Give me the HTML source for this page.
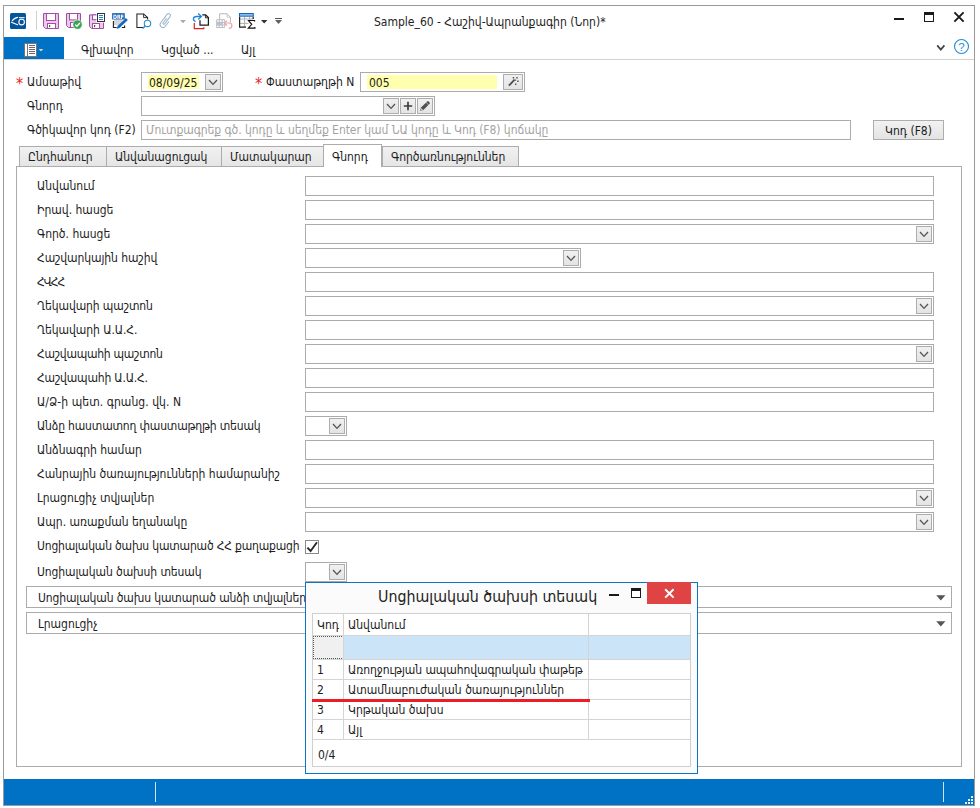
<!DOCTYPE html>
<html><head><meta charset="utf-8">
<style>
*{box-sizing:border-box;margin:0;padding:0}
html,body{width:980px;height:808px;background:#fff;overflow:hidden}
body{position:relative;font-family:"DejaVu Sans Condensed","DejaVu Sans","Liberation Sans",sans-serif;font-size:12px;color:#1c1c1c;line-height:16px}
.a{position:absolute}
.t{position:absolute;white-space:nowrap;height:16px;line-height:16px}
.f{position:absolute;border:1px solid #ababab;background:#fff;height:20px}
.b{position:absolute;width:16px;height:16px;border:1px solid #adadad;background:linear-gradient(#f0f0f0,#e4e4e4)}
.b svg{position:absolute;left:0;top:0}
.tab{position:absolute;top:146px;height:21px;border:1px solid #acacac;background:linear-gradient(#f1f1f1,#e5e5e5);text-align:left;padding-left:8px;line-height:21px;white-space:nowrap}
.red{color:#f02424}
.s{display:inline-block;white-space:nowrap}
</style></head><body>
<!-- window frame -->
<div class="a" id="win" style="left:3px;top:5px;width:972px;height:801px;border:1px solid #999;background:#fff"></div>

<!-- TITLEBAR -->
<div id="titlebar">
<!-- app icon -->
<svg class="a" style="left:10px;top:13px" width="16" height="16" viewBox="0 0 16 16"><rect x="0" y="0" width="16" height="16" rx="1.5" fill="#04549c"/><path d="M7.5 4.4 Q4 5.2 2.3 7.7" stroke="#fff" stroke-width="1.2" fill="none" stroke-linecap="round"/><path d="M1.4 9.3 L7.6 11.7" stroke="#fff" stroke-width="1.2" fill="none" stroke-linecap="round"/><path d="M8.9 4.7 H14.6" stroke="#fff" stroke-width="1.1" fill="none"/><circle cx="11.6" cy="9.1" r="2.8" stroke="#fff" stroke-width="1.1" fill="none"/></svg>
<div class="a" style="left:36px;top:11px;width:1px;height:19px;background:#d0d0d0"></div>
<!-- save -->
<svg class="a" style="left:43px;top:13px" width="16" height="16" viewBox="0 0 16 16"><path d="M0.5 0.5 H15.5 V15.5 H2.5 L0.5 13.5 Z" fill="#e8cbe8" stroke="#a64ca6" stroke-width="1"/><rect x="3.5" y="0.5" width="9" height="7" fill="#fff" stroke="#a64ca6"/><rect x="4.5" y="10.5" width="8" height="5" fill="#fff" stroke="#a64ca6"/><rect x="6" y="12" width="1.2" height="2.2" fill="#555"/></svg>
<!-- save + check -->
<svg class="a" style="left:66px;top:13px" width="17" height="17" viewBox="0 0 17 17"><path d="M0.5 0.5 H14.5 V14.5 H2.5 L0.5 12.5 Z" fill="#e8cbe8" stroke="#a64ca6" stroke-width="1"/><rect x="3.5" y="0.5" width="8" height="6.4" fill="#fff" stroke="#a64ca6"/><rect x="4.5" y="9.5" width="6" height="5" fill="#fff" stroke="#a64ca6"/><circle cx="11.5" cy="11.6" r="4.7" fill="#39a556" stroke="#fff" stroke-width="0.6"/><path d="M9.2 11.6 L10.9 13.3 L13.9 10" stroke="#fff" stroke-width="1.3" fill="none"/></svg>
<!-- save + doc -->
<svg class="a" style="left:89px;top:13px" width="17" height="17" viewBox="0 0 17 17"><path d="M0.5 1.9 H14.5 V15.5 H2.5 L0.5 13.5 Z" fill="#e8cbe8" stroke="#a64ca6" stroke-width="1"/><rect x="3.5" y="1.9" width="6" height="4.8" fill="#fff" stroke="#a64ca6"/><rect x="3.5" y="10.5" width="7" height="5" fill="#fff" stroke="#a64ca6"/><rect x="5" y="12" width="1.2" height="2.2" fill="#555"/><rect x="7.4" y="-0.6" width="9.2" height="10.2" fill="#fff"/><rect x="8.5" y="0.5" width="7" height="8" fill="#fff" stroke="#333"/><path d="M10 2.5 H14 M10 4.5 H14 M10 6.5 H14" stroke="#1e7fd2" stroke-width="1"/></svg>
<!-- DRF -->
<svg class="a" style="left:112px;top:13px;will-change:transform" width="17" height="17" viewBox="0 0 17 17"><rect x="2" y="6.4" width="8.2" height="5.8" fill="#d6d6d6"/><path d="M1.4 7.9 V14.5 H4.6 M9.8 14.5 H12.6 V12.4" stroke="#222" stroke-width="1.1" fill="none"/><rect x="0.1" y="0.1" width="12.7" height="6.4" fill="#2268b8"/><text x="0.9" y="5.5" font-family="'DejaVu Sans','Liberation Sans',sans-serif" font-weight="bold" font-size="6" fill="#fff" textLength="11" lengthAdjust="spacingAndGlyphs">DRF</text><path d="M4.7 15.9 L5.5 13.1 L13.8 5 L15.9 7.1 L7.5 15.1 Z" fill="#1a6fc4"/><path d="M6.9 13.8 L14.5 6.4" stroke="#0d4a8f" stroke-width="0.7" stroke-dasharray="1.2 0.8"/></svg>
<!-- page magnifier -->
<svg class="a" style="left:136px;top:13px" width="17" height="17" viewBox="0 0 17 17"><path d="M8.2 14.4 H0.9 V0.9 H7.6 L11.6 4.6 V6.6" stroke="#222" stroke-width="1.05" fill="none"/><path d="M7.6 0.9 V4.6 H11.6" stroke="#222" stroke-width="0.9" fill="none"/><circle cx="11.5" cy="10.4" r="3.2" stroke="#2a8dd8" stroke-width="1.1" fill="#fff"/><path d="M9.3 12.7 L6.5 15.6" stroke="#2a8dd8" stroke-width="1.3"/></svg>
<!-- paperclip -->
<svg class="a" style="left:157px;top:11px" width="18" height="19" viewBox="0 0 18 19"><g transform="translate(9.1,9.6) rotate(37)"><path d="M-1.1 -2.5 V3.5 A0.95 0.95 0 0 0 0.8 3.5 V-5.5 A1.9 1.9 0 0 0 -3 -5.5 V5 A2.9 2.9 0 0 0 2.8 5 V-1" stroke="#9db7cc" stroke-width="1.05" fill="none"/></g></svg>
<svg class="a" style="left:180px;top:20px" width="6" height="4" viewBox="0 0 6 4"><path d="M0 0 H6 L3 3.2 Z" fill="#ababab"/></svg>
<!-- copy icon -->
<svg class="a" style="left:192px;top:13px" width="18" height="17" viewBox="0 0 18 17"><path d="M10.3 1.8 H13.6 L16.4 4.6 V12.2 H8 V7.2" stroke="#1c1c1c" stroke-width="1.25" fill="none"/><path d="M13.4 2 V4.8 H16.2" stroke="#1c1c1c" stroke-width="0.9" fill="none"/><path d="M3.6 8.4 Q1.2 7.6 1.4 5.7 Q1.7 3.5 4.6 3.5 H9" stroke="#1e86d8" stroke-width="1.3" fill="none"/><path d="M6.2 0.6 L9.4 3.5 L6.2 6.4" stroke="#1e86d8" stroke-width="1.3" fill="none"/><path d="M2.3 10 V15.6 H11.8 V14.2" stroke="#e02020" stroke-width="1.2" fill="none"/></svg>
<!-- doc back arrow (disabled) -->
<svg class="a" style="left:216px;top:13px" width="17" height="17" viewBox="0 0 17 17"><path d="M3.7 6 V0.8 H11 L14.4 4.2 V9.5" stroke="#b7b7b7" fill="none"/><path d="M11 0.8 V4.2 H14.4" stroke="#c4c4c4" fill="none" stroke-width="0.8"/><rect x="0.7" y="9.7" width="5.6" height="2.1" fill="#a8cdf0"/><path d="M0.7 6.7 H8.7 V14.5 H0.7 Z M0.7 9.4 H8.7 M0.7 12.1 H8.7 M3.3 6.7 V14.5 M6.2 6.7 V14.5" stroke="#b7b7b7" stroke-width="0.9" fill="none"/><path d="M8.4 10 H13.2 Q15.9 10 15.9 12.7 Q15.9 15.4 12.8 15.4" stroke="#eda5ab" stroke-width="1.2" fill="none"/><path d="M11 7.7 L8.3 10 L11 12.5" stroke="#eda5ab" stroke-width="1.2" fill="none"/></svg>
<!-- table sigma -->
<svg class="a" style="left:239px;top:13px" width="17" height="17" viewBox="0 0 17 17"><path d="M5.6 3.7 V14 M10.6 3.7 V6.5 M0.6 6 H14 M0.6 10.4 H9.5" stroke="#a8a8a8" stroke-width="0.9" fill="none"/><rect x="0" y="0" width="14.8" height="3.7" fill="#1565c0"/><rect x="1" y="1.2" width="12.8" height="1.4" fill="#9fd0f5"/><path d="M0.6 3.7 V14.2 H7 M14.2 3.7 V6" stroke="#1c1c1c" stroke-width="1.2" fill="none"/><path d="M15.6 8.4 V7.5 H9.5 L12.7 11.3 L9.3 15.1 H15.9 V14.1" stroke="#111" stroke-width="1.15" fill="none"/></svg>
<svg class="a" style="left:261px;top:20px" width="7" height="4" viewBox="0 0 7 4"><path d="M0 0 H6.4 L3.2 3.4 Z" fill="#333"/></svg>
<svg class="a" style="left:275px;top:17px" width="8" height="8" viewBox="0 0 8 8"><rect x="0" y="1" width="7" height="1" fill="#555"/><path d="M0 3 H7 L3.5 7 Z" fill="#606060"/></svg>
<div class="t" style="left:374px;top:14px;color:#1e1e1e">Sample_60 - Հաշիվ-Ապրանքագիր (Նոր)*</div>
<!-- window controls -->
<div class="a" style="left:894px;top:18px;width:10px;height:2px;background:#1a1a1a"></div>
<div class="a" style="left:924px;top:12px;width:10px;height:10px;border:1px solid #1a1a1a;border-top-width:3px"></div>
<svg class="a" style="left:953px;top:11px" width="12" height="12" viewBox="0 0 12 12"><path d="M1.4 1.4 L10.6 10.6 M10.6 1.4 L1.4 10.6" stroke="#1a1a1a" stroke-width="1.9"/></svg>
</div>
<!-- RIBBON -->
<div id="ribbon">
<div class="a" style="left:4px;top:59px;width:970px;height:1px;background:#d2d2d2"></div>
<div class="a" style="left:4px;top:37px;width:60px;height:22px;background:#0072c6"></div>
<svg class="a" style="left:24px;top:43px" width="20" height="14" viewBox="0 0 20 14"><rect x="0.5" y="0.5" width="12" height="13" fill="#fff" stroke="#7a726c"/><path d="M3.5 0.5 V13.5" stroke="#7a726c"/><path d="M5 2.5 H11 M5 4.5 H11 M5 6.5 H11 M5 8.5 H11 M5 10.5 H11" stroke="#686868" stroke-width="1"/><path d="M14.7 6 H19.3 L17 8.5 Z" fill="#d8d4d0"/></svg>
<div class="t" style="left:81px;top:42px">Գլխավոր</div>
<div class="t" style="left:161px;top:42px">Կցված ...</div>
<div class="t" style="left:241px;top:42px">Այլ</div>
<svg class="a" style="left:936px;top:44px" width="10" height="8" viewBox="0 0 10 8"><path d="M1.2 1.4 L4.8 5.6 L8.4 1.4" stroke="#444" stroke-width="1.7" fill="none"/></svg>
<svg class="a" style="left:953px;top:38px" width="17" height="17" viewBox="0 0 17 17"><circle cx="8.5" cy="8.5" r="7" stroke="#1e8ad6" stroke-width="1.1" fill="#fff"/><text x="8.5" y="12.6" text-anchor="middle" font-family="'Liberation Sans',sans-serif" font-size="11.5" fill="#1e8ad6">?</text></svg>
</div>
<!-- FORMTOP -->
<div id="formtop">
<div class="t red" style="left:16px;top:76px;font-size:16px">*</div><div class="t" style="left:27px;top:74px">Ամսաթիվ</div>
<div class="f" style="left:141px;top:72px;width:82px"></div>
<div class="a" style="left:148px;top:75px;width:51px;height:14px;background:#ffffae"></div>
<div class="t" style="left:149px;top:75px">08/09/25</div>
<div class="b" style="left:205px;top:74px"><svg width="14" height="14" viewBox="0 0 14 14"><path d="M3 5 L7 9.4 L11 5" stroke="#555" stroke-width="1.3" fill="none"/></svg></div>
<div class="t red" style="left:255px;top:76px;font-size:16px">*</div><div class="t" style="left:266px;top:74px">Փաստաթղթի N</div>
<div class="f" style="left:360px;top:72px;width:165px"></div>
<div class="a" style="left:367px;top:75px;width:130px;height:14px;background:#ffffae"></div>
<div class="t" style="left:369px;top:75px">005</div>
<div class="b" style="left:503px;top:74px;width:20px"><svg width="18" height="14" viewBox="0 0 18 14"><path d="M4.9 10.7 L10.6 4.7" stroke="#505050" stroke-width="1.9"/><path d="M8.7 2 h1.5 v1.5 h-1.5z M12.2 2 h1.5 v1.5 h-1.5z M10.8 4.4 h1.3 v1.3 h-1.3z M13.2 5.6 h1.5 v1.5 h-1.5z M11 8.6 h1.4 v1.4 h-1.4z" fill="#555"/></svg></div>
<div class="t" style="left:27px;top:98px">Գնորդ</div>
<div class="f" style="left:141px;top:96px;width:294px"></div>
<div class="b" style="left:383px;top:98px"><svg width="14" height="14" viewBox="0 0 14 14"><path d="M3 5 L7 9.4 L11 5" stroke="#555" stroke-width="1.3" fill="none"/></svg></div>
<div class="b" style="left:400px;top:98px"><svg width="14" height="14" viewBox="0 0 14 14"><path d="M7 2.8 V11.2 M2.8 7 H11.2" stroke="#3c3c3c" stroke-width="1.7" fill="none"/></svg></div>
<div class="b" style="left:417px;top:98px"><svg width="14" height="14" viewBox="0 0 14 14"><path d="M2.1 11.8 L3 8.6 L9.2 2.4 Q9.9 1.8 10.6 2.4 L11.6 3.4 Q12.2 4.1 11.6 4.8 L5.4 11 Z" fill="#505050"/><path d="M8.2 3.5 L10.6 5.9" stroke="#dcdcdc" stroke-width="0.7"/><path d="M3.3 9 L5 10.7 L2.6 11.4 Z" fill="#cfcfcf"/></svg></div>
<div class="t" style="left:27px;top:122px">Գծիկավոր կոդ (F2)</div>
<div class="f" style="left:141px;top:120px;width:710px"></div>
<div class="t" style="left:146px;top:122px;color:#a3a3a3;letter-spacing:-0.05px">Մուտքագրեք գծ. կոդը և սեղմեք Enter կամ ՆԱ կոդը և Կոդ (F8) կոճակը</div>
<div class="a" style="left:873px;top:120px;width:71px;height:20px;border:1px solid #adadad;background:linear-gradient(#f2f2f2,#e3e3e3);text-align:center;line-height:20px;white-space:nowrap"><span class="s c">Կոդ (F8)</span></div>
</div>
<!-- TABS -->
<div id="tabs">
<div class="a" style="left:16px;top:166px;width:946px;height:601px;border:1px solid #ababab;background:#fff"></div>
<div class="tab" style="left:19px;width:88px"><span class="s">Ընդհանուր</span></div>
<div class="tab" style="left:106px;width:116px"><span class="s">Անվանացուցակ</span></div>
<div class="tab" style="left:221px;width:103px"><span class="s">Մատակարար</span></div>
<div class="tab" style="left:382px;width:137px"><span class="s">Գործառնություններ</span></div>
<div class="tab" style="left:323px;width:59px;top:144px;height:23px;background:#fff;border-bottom:none;line-height:25px;"><span class="s">Գնորդ</span></div>
</div>
<!-- PANEL -->
<div id="panel">
<div class="t" style="left:37px;top:178px">Անվանում</div>
<div class="f" style="left:305px;top:176px;width:629px"></div>
<div class="t" style="left:37px;top:202px">Իրավ. հասցե</div>
<div class="f" style="left:305px;top:200px;width:629px"></div>
<div class="t" style="left:37px;top:226px">Գործ. հասցե</div>
<div class="f" style="left:305px;top:224px;width:629px"></div><div class="b" style="left:916px;top:226px"><svg width="14" height="14" viewBox="0 0 14 14"><path d="M3 5 L7 9.4 L11 5" stroke="#555" stroke-width="1.3" fill="none"/></svg></div>
<div class="t" style="left:37px;top:250px;letter-spacing:-0.09px">Հաշվարկային հաշիվ</div>
<div class="f" style="left:305px;top:248px;width:276px"></div><div class="b" style="left:563px;top:250px"><svg width="14" height="14" viewBox="0 0 14 14"><path d="M3 5 L7 9.4 L11 5" stroke="#555" stroke-width="1.3" fill="none"/></svg></div>
<div class="t" style="left:37px;top:274px;letter-spacing:-1.0px">ՀՎՀՀ</div>
<div class="f" style="left:305px;top:272px;width:629px"></div>
<div class="t" style="left:37px;top:298px;letter-spacing:-0.11px">Ղեկավարի պաշտոն</div>
<div class="f" style="left:305px;top:296px;width:629px"></div><div class="b" style="left:916px;top:298px"><svg width="14" height="14" viewBox="0 0 14 14"><path d="M3 5 L7 9.4 L11 5" stroke="#555" stroke-width="1.3" fill="none"/></svg></div>
<div class="t" style="left:37px;top:322px;letter-spacing:-0.07px">Ղեկավարի Ա.Ա.Հ.</div>
<div class="f" style="left:305px;top:320px;width:629px"></div>
<div class="t" style="left:37px;top:346px;letter-spacing:-0.26px">Հաշվապահի պաշտոն</div>
<div class="f" style="left:305px;top:344px;width:629px"></div><div class="b" style="left:916px;top:346px"><svg width="14" height="14" viewBox="0 0 14 14"><path d="M3 5 L7 9.4 L11 5" stroke="#555" stroke-width="1.3" fill="none"/></svg></div>
<div class="t" style="left:37px;top:370px;letter-spacing:-0.18px">Հաշվապահի Ա.Ա.Հ.</div>
<div class="f" style="left:305px;top:368px;width:629px"></div>
<div class="t" style="left:37px;top:394px;letter-spacing:0.06px">Ա/Ձ-ի պետ. գրանց. վկ. N</div>
<div class="f" style="left:305px;top:392px;width:629px"></div>
<div class="t" style="left:37px;top:418px;letter-spacing:-0.17px">Անձը հաստատող փաստաթղթի տեսակ</div>
<div class="f" style="left:305px;top:416px;width:42px"></div><div class="b" style="left:329px;top:418px"><svg width="14" height="14" viewBox="0 0 14 14"><path d="M3 5 L7 9.4 L11 5" stroke="#555" stroke-width="1.3" fill="none"/></svg></div>
<div class="t" style="left:37px;top:442px">Անձնագրի համար</div>
<div class="f" style="left:305px;top:440px;width:629px"></div>
<div class="t" style="left:37px;top:466px">Հանրային ծառայությունների համարանիշ</div>
<div class="f" style="left:305px;top:464px;width:629px"></div>
<div class="t" style="left:37px;top:490px">Լրացուցիչ տվյալներ</div>
<div class="f" style="left:305px;top:488px;width:629px"></div><div class="b" style="left:916px;top:490px"><svg width="14" height="14" viewBox="0 0 14 14"><path d="M3 5 L7 9.4 L11 5" stroke="#555" stroke-width="1.3" fill="none"/></svg></div>
<div class="t" style="left:37px;top:514px">Ապր. առաքման եղանակը</div>
<div class="f" style="left:305px;top:512px;width:629px"></div><div class="b" style="left:916px;top:514px"><svg width="14" height="14" viewBox="0 0 14 14"><path d="M3 5 L7 9.4 L11 5" stroke="#555" stroke-width="1.3" fill="none"/></svg></div>
<div class="t" style="left:37px;top:538px;letter-spacing:-0.18px">Սոցիալական ծախս կատարած ՀՀ քաղաքացի</div>
<div class="a" style="left:305px;top:540px;width:14px;height:14px;border:1px solid #8a8a8a;background:#fff"><svg class="a" style="left:0;top:0" width="12" height="12" viewBox="0 0 12 12"><path d="M1.4 6.6 L4.6 10 L11 1.2" stroke="#2a2a2a" stroke-width="1.9" fill="none"/></svg></div>
<div class="t" style="left:37px;top:564px;letter-spacing:-0.09px">Սոցիալական ծախսի տեսակ</div>
<div class="f" style="left:305px;top:562px;width:42px"></div><div class="b" style="left:329px;top:564px"><svg width="14" height="14" viewBox="0 0 14 14"><path d="M3 5 L7 9.4 L11 5" stroke="#555" stroke-width="1.3" fill="none"/></svg></div>
<div class="a" style="left:26px;top:586px;width:926px;height:22px;border:1px solid #ababab;background:#fff"><svg class="a" style="right:5px;top:8px" width="10" height="6" viewBox="0 0 10 6"><path d="M0.2 0.3 H9.4 L4.8 5.4 Z" fill="#555"/></svg></div><div class="t" style="left:38px;top:590px;letter-spacing:-0.12px">Սոցիալական ծախս կատարած անձի տվյալներ</div>
<div class="a" style="left:26px;top:612px;width:926px;height:22px;border:1px solid #ababab;background:#fff"><svg class="a" style="right:5px;top:8px" width="10" height="6" viewBox="0 0 10 6"><path d="M0.2 0.3 H9.4 L4.8 5.4 Z" fill="#555"/></svg></div><div class="t" style="left:38px;top:616px">Լրացուցիչ</div>
</div>
<!-- POPUP -->
<div id="popup">
<div class="a" style="left:305px;top:582px;width:393px;height:192px;border:1px solid #0b74c7;background:#fbfbfb"></div>
<div class="t" style="left:378px;top:586px;font-size:15.8px;height:22px;line-height:22px;color:#222">Սոցիալական ծախսի տեսակ</div>
<div class="a" style="left:609px;top:594px;width:10px;height:2px;background:#1a1a1a"></div>
<div class="a" style="left:631px;top:588px;width:10px;height:10px;border:1px solid #1a1a1a;border-top-width:3px;background:#fff"></div>
<div class="a" style="left:647px;top:582px;width:44px;height:22px;background:#e04343"></div>
<svg class="a" style="left:664px;top:588px" width="11" height="11" viewBox="0 0 11 11"><path d="M1.2 1.2 L9.6 9.6 M9.6 1.2 L1.2 9.6" stroke="#fff" stroke-width="2"/></svg>
<!-- grid -->
<div class="a" style="left:312px;top:613px;width:379px;height:154px;border:1px solid #cfcfcf;background:#fff"></div>
<div class="a" style="left:313px;top:636px;width:377px;height:23px;background:#cce4f7"></div>
<div class="a" style="left:313px;top:636px;width:31px;height:23px;background:#f0f0f0;border:1px dotted #555"></div>
<div class="a" style="left:343px;top:614px;width:1px;height:125px;background:#d4d4d4"></div>
<div class="a" style="left:588px;top:614px;width:1px;height:125px;background:#d4d4d4"></div>
<div class="a" style="left:313px;top:635px;width:377px;height:1px;background:#d4d4d4"></div>
<div class="a" style="left:313px;top:659px;width:377px;height:1px;background:#d4d4d4"></div>
<div class="a" style="left:313px;top:679px;width:377px;height:1px;background:#d4d4d4"></div>
<div class="a" style="left:313px;top:699px;width:377px;height:1px;background:#d4d4d4"></div>
<div class="a" style="left:313px;top:719px;width:377px;height:1px;background:#d4d4d4"></div>
<div class="a" style="left:313px;top:739px;width:377px;height:1px;background:#d4d4d4"></div>
<div class="t" style="left:317px;top:617px">Կոդ</div><div class="t" style="left:348px;top:617px">Անվանում</div>
<div class="t" style="left:317px;top:662px">1</div><div class="t" style="left:348px;top:662px;letter-spacing:-0.07px">Առողջության ապահովագրական փաթեթ</div>
<div class="t" style="left:317px;top:682px">2</div><div class="t" style="left:348px;top:682px">Ատամնաբուժական ծառայություններ</div>
<div class="t" style="left:317px;top:702px">3</div><div class="t" style="left:348px;top:702px">Կրթական ծախս</div>
<div class="t" style="left:317px;top:722px">4</div><div class="t" style="left:348px;top:722px">Այլ</div>
<div class="t" style="left:318px;top:747px">0/4</div>
<div class="a" style="left:312px;top:699px;width:278px;height:3px;background:#ee1c24"></div>
</div>
<!-- STATUS -->
<div id="status">
<div class="a" style="left:4px;top:779px;width:970px;height:26px;background:#0072c6"></div>
<div class="a" style="left:155px;top:782px;width:1px;height:20px;background:#cfe3f5"></div>
<div class="a" style="left:943px;top:782px;width:1px;height:20px;background:#cfe3f5"></div>
<svg class="a" style="left:964px;top:795px" width="10" height="10" viewBox="0 0 10 10"><path d="M7 1 h2 v2 h-2z M4 4 h2 v2 h-2z M7 4 h2 v2 h-2z M1 7 h2 v2 h-2z M4 7 h2 v2 h-2z M7 7 h2 v2 h-2z" fill="#e8f1fa"/></svg>
</div>
<script>
(function(){try{
var d=document,b=d.body,m=function(f){var e=d.createElement('span');e.style.cssText='position:absolute;left:-9999px;top:0;white-space:nowrap;font-size:40px;font-family:'+f;e.textContent='Հանրային ծառայությունների համարանիշ';b.appendChild(e);var w=e.getBoundingClientRect().width;b.removeChild(e);return w;};
var wc=m('"DejaVu Sans Condensed","DejaVu Sans",sans-serif'),wn=m('"DejaVu Sans",sans-serif');
if(wn>0&&Math.abs(wc-wn)<wn*0.02){var k=0.9,l=d.querySelectorAll('.t,.s');for(var i=0;i<l.length;i++){var e=l[i];e.style.transform='scaleX('+k+')';e.style.transformOrigin=(e.className.indexOf(' c')>=0?'50%':'0')+' 50%';}}
}catch(e){}})();
</script>
</body></html>
